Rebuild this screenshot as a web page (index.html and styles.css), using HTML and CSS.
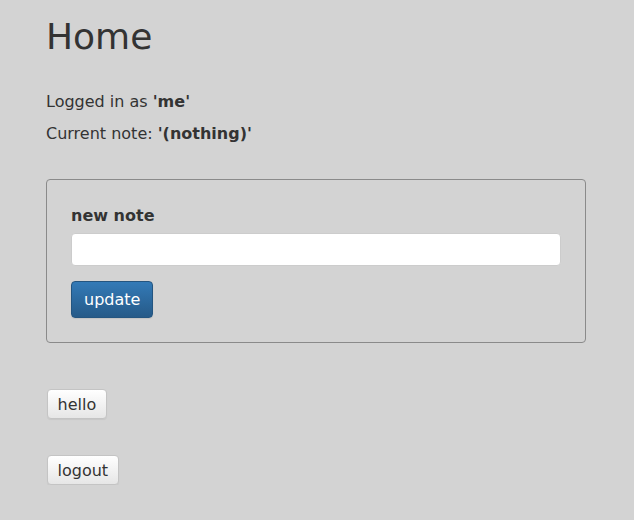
FILE: index.html
```html
<!DOCTYPE html>
<html>
<head>
<meta charset="utf-8">
<link rel="stylesheet" href="styles.css">
</head>
<body>
<div class="page">
  <h1 class="title">Home</h1>
  <p class="info">Logged in as <b>'me'</b></p>
  <p class="info">Current note: <b>'(nothing)'</b></p>
  <form class="note-form">
    <label class="label">new note</label>
    <input class="input" type="text">
    <button type="button" class="btn btn-primary">update</button>
  </form>
  <div class="actions">
    <button type="button" class="btn btn-default">hello</button>
    <button type="button" class="btn btn-default">logout</button>
  </div>
</div>
</body>
</html>
```
FILE: styles.css
```css
html, body {
  margin: 0;
  padding: 0;
  background: #d3d3d3;
}
body {
  font-family: "DejaVu Sans", sans-serif;
  font-size: 16px;
  color: #333;
}
.page {
  padding: 0 46px;
  display: flex;
  flex-direction: column;
  align-items: flex-start;
}
.title {
  font-size: 36px;
  font-weight: normal;
  margin: 14px 0 0 0;
  line-height: 46px;
}
.info {
  margin: 0;
  line-height: 22px;
}
.title + .info { margin-top: 31px; }
.info + .info { margin-top: 10px; }
.note-form {
  width: 490px;
  margin-top: 34px;
  border: 1px solid #8a8a8a;
  border-radius: 4px;
  padding: 25px 24px 24px 24px;
  display: flex;
  flex-direction: column;
  align-items: flex-start;
}
.label {
  font-weight: bold;
  line-height: 22px;
}
.input {
  box-sizing: border-box;
  width: 490px;
  height: 33px;
  margin-top: 6px;
  border: 1px solid #ccc;
  border-radius: 4px;
  background: #fff;
  font: inherit;
  padding: 6px 12px;
}
.btn {
  font-family: "DejaVu Sans", sans-serif;
  font-size: 16px;
  border-radius: 4px;
  cursor: pointer;
}
.btn-primary {
  margin-top: 15px;
  height: 37px;
  padding: 0 12px;
  color: #fff;
  border: 1px solid #245580;
  background: linear-gradient(to bottom, #337ab7, #265a88);
  box-shadow: 0 1px 1px rgba(0, 0, 0, 0.08);
}
.actions {
  margin-top: 46px;
  display: flex;
  flex-direction: column;
  align-items: flex-start;
  gap: 36px;
  margin-left: 1px;
}
.btn-default {
  height: 30px;
  padding: 0 9.5px;
  color: #333;
  border: 1px solid #c4c4c4;
  background: linear-gradient(to bottom, #fff, #e6e6e6);
  box-shadow: 0 1px 1px rgba(0, 0, 0, 0.06);
}
```
